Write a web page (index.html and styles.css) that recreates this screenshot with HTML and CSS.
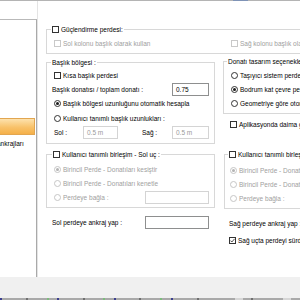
FILE: index.html
```html
<!DOCTYPE html>
<html lang="tr">
<head>
<meta charset="utf-8">
<title>Perde ayarları</title>
<link rel="stylesheet" href="styles.css">
</head>
<body>
<div class="topline"><span class="tl-mark"></span></div>
<div class="window">
  <aside class="sidebar">
    <div class="item selected"></div>
    <div class="item"><span class="clip">ankrajları</span></div>
  </aside>
  <main class="main">
    <div class="group g1">
      <div class="legend lg1"><span class="cb"></span><span>Güçlendirme perdesi:</span></div>
      <div class="g1-row">
        <div class="opt dis"><span class="cb dis"></span><span>Sol kolonu başlık olarak kullan</span></div>
        <div class="opt dis"><span class="cb dis"></span><span>Sağ kolonu başlık olarak kullan</span></div>
      </div>
    </div>
    <div class="cols">
      <div class="col left">
        <div class="group g2">
          <div class="legend lg2"><span>Başlık bölgesi :</span></div>
          <div class="row first pl7"><div class="opt"><span class="cb"></span><span>Kısa başlık perdesi</span></div></div>
          <div class="row split pl5"><span>Başlık donatısı / toplam donatı :</span><span class="field w37">0.75</span></div>
          <div class="row tall pl7"><div class="opt"><span class="rb on"></span><span>Başlık bölgesi uzunluğunu otomatik hesapla</span></div></div>
          <div class="row pl7"><div class="opt"><span class="rb"></span><span>Kullanıcı tanımlı başlık uzunlukları :</span></div></div>
          <div class="row tall pl7"><span class="lab1">Sol :</span><span class="field dis w35">0.5 m</span><span class="lab2">Sağ :</span><span class="field dis w37">0.5 m</span></div>
        </div>
        <div class="group g3">
          <div class="legend lg3"><span class="cb"></span><span>Kullanıcı tanımlı birleşim - Sol uç :</span></div>
          <div class="row first pl7"><div class="opt dis"><span class="rb dis on"></span><span>Birincil Perde - Donatıları kesiştir</span></div></div>
          <div class="row pl7"><div class="opt dis"><span class="rb dis"></span><span>Birincil Perde - Donatıları kenetle</span></div></div>
          <div class="row split pl7"><div class="opt dis"><span class="rb dis"></span><span>Perdeye bağla :</span></div><span class="field dis w64"></span></div>
        </div>
        <div class="row split anchor pl6"><span>Sol perdeye ankraj yap :</span><span class="field w64"></span></div>
      </div>
      <div class="col right">
        <div class="group g4">
          <div class="legend lg4"><span>Donatı tasarım seçenekleri</span></div>
          <div class="row first pl7"><div class="opt"><span class="rb"></span><span>Taşıyıcı sistem perdeleri</span></div></div>
          <div class="row pl7"><div class="opt"><span class="rb on"></span><span>Bodrum kat çevre perdeleri</span></div></div>
          <div class="row pl7"><div class="opt"><span class="rb"></span><span>Geometriye göre otomatik</span></div></div>
        </div>
        <div class="row apl pl7"><div class="opt"><span class="cb"></span><span>Aplikasyonda daima göster</span></div></div>
        <div class="group g5">
          <div class="legend lg5"><span class="cb"></span><span>Kullanıcı tanımlı birleşim - Sağ uç :</span></div>
          <div class="row first pl5"><div class="opt dis"><span class="rb dis on"></span><span>Birincil Perde - Donatıları kesiştir</span></div></div>
          <div class="row pl5"><div class="opt dis"><span class="rb dis"></span><span>Birincil Perde - Donatıları kenetle</span></div></div>
          <div class="row pl5"><div class="opt dis"><span class="rb dis"></span><span>Perdeye bağla :</span></div></div>
        </div>
        <div class="row anchor pl6"><span>Sağ perdeye ankraj yap :</span></div>
        <div class="row apl pl6"><div class="opt"><span class="cb on"><svg viewBox="0 0 7 7" width="5" height="5"><polyline points="0.6,3.6 2.6,5.6 6.4,1.2" fill="none" stroke="#222" stroke-width="1.1"/></svg></span><span>Sağ uçta perdeyi sürdür</span></div></div>
      </div>
    </div>
  </main>
</div>
<div class="footer"></div>
<div class="bottomline">
  <span class="bm navy"></span><span class="bm gray g24"></span><span class="bm gray g3"></span><span class="bm green g14"></span><span class="bm navy g8"></span><span class="bm gray g24"></span><span class="bm gray g2"></span><span class="bm green g14"></span><span class="bm navy g9"></span><span class="bm gray g23"></span><span class="bm gray g3"></span><span class="bm green g14"></span><span class="bm navy g9"></span><span class="bm gray g24"></span><span class="bm gray g4"></span><span class="bm light g30"></span><span class="bm gray g8"></span><span class="bm light g30"></span>
</div>
</body>
</html>
```
FILE: styles.css
```css
* { box-sizing: border-box; }
html, body { margin: 0; padding: 0; }
body {
  width: 300px;
  height: 300px;
  overflow: hidden;
  background: #fff;
  font-family: "Liberation Sans", Arial, sans-serif;
  font-size: 6.5px;
  color: #000;
}
.topline {
  height: 1px;
  background: #b4b4b4;
  display: flex;
}
.tl-mark {
  width: 15px;
  height: 1px;
  margin-left: 233px;
  background: #7f93b6;
}
.window {
  height: 276px;
  display: flex;
}
.sidebar {
  width: 37px;
  height: 258px;
  margin-top: 18px;
  border-top: 1px solid #b9b9b9;
  border-right: 1px solid #a9a9a9;
  background: #fff;
  overflow: hidden;
  padding-top: 98px;
  flex: none;
}
.item {
  width: 35px;
  height: 17px;
  display: flex;
  align-items: center;
  white-space: nowrap;
  overflow: hidden;
}
.item.selected {
  background: linear-gradient(#fde2ad, #f8c26a 55%, #f5b049);
  border: 1px solid #e2a650;
  border-left: none;
}
.clip { margin-left: -3px; }
.main {
  flex: 1;
  min-width: 0;
  border-left: 1px solid #e4e4e4;
  padding-left: 8px;
  margin-left: 0;
}
.group {
  border: 1px solid #d8d8d8;
}
.legend {
  display: flex;
  align-items: center;
  gap: 2px;
  height: 9px;
  margin-top: -5px;
  width: max-content;
  padding: 0 1px;
  background: #fff;
  white-space: nowrap;
}
.g1 {
  margin-top: 28px;
  border-right: none;
  padding-bottom: 5px;
}
.lg1 { margin-left: 4px; }
.g1-row {
  display: grid;
  grid-template-columns: 177px 1fr;
  height: 10px;
  margin-top: 4px;
  padding-left: 7px;
  align-items: center;
  white-space: nowrap;
}
.cols {
  display: grid;
  grid-template-columns: 169px 1fr;
  column-gap: 8px;
}
.col { min-width: 0; white-space: nowrap; }
.row {
  display: flex;
  align-items: center;
  height: 14px;
  white-space: nowrap;
}
.row.tall { height: 15px; }
.row.split { justify-content: space-between; }
.pl5 { padding-left: 5px; }
.pl6 { padding-left: 6px; }
.pl7 { padding-left: 7px; }
.opt {
  display: flex;
  align-items: center;
  gap: 2px;
}
.dis { color: #a0a0a0; }
.cb {
  width: 7px;
  height: 7px;
  border: 1px solid #333;
  background: #fff;
  flex: none;
  display: flex;
  align-items: center;
  justify-content: center;
}
.cb.dis { border-color: #c9c9c9; }
.rb {
  width: 7px;
  height: 7px;
  border: 1px solid #333;
  border-radius: 50%;
  background: #fff;
  flex: none;
  display: flex;
  align-items: center;
  justify-content: center;
}
.rb.on::after {
  content: "";
  width: 3px;
  height: 3px;
  border-radius: 50%;
  background: #1a1a1a;
}
.rb.dis { border-color: #c6c6c6; }
.rb.dis.on::after { background: #b3b3b3; }
.field {
  height: 13px;
  border: 1px solid #8e8f8f;
  background: #fff;
  padding-left: 3px;
  display: flex;
  align-items: center;
  color: #000;
  flex: none;
}
.field.dis { border-color: #d4d4d4; color: #9a9a9a; }
.w35 { width: 35px; }
.w37 { width: 37px; }
.w64 { width: 64px; }
.lab1 { width: 29px; }
.lab2 { width: 30px; margin-left: 24px; }

/* left column */
.g2 { margin-top: 8px; padding-bottom: 3px; }
.lg2 { margin-left: 4px; }
.g2 .row.split { padding-right: 5px; }
.row.first { margin-top: 1px; }
.g3 { margin-top: 10px; padding-bottom: 3px; }
.lg3 { margin-left: 5px; }
.g3 .row.first { margin-top: 3px; }
.g3 .row.split { padding-right: 5px; }
.anchor { margin-top: 7px; }
.left .anchor { padding-right: 6px; }

/* right column */
.g4 {
  margin-top: 7px;
  border-right: none;
  padding-bottom: 3px;
}
.lg4 { margin-left: 3px; }
.g4 .row.first { margin-top: 2px; }
.apl { margin-top: 3px; }
.g5 {
  margin-top: 23px;
  margin-left: 1px;
  border-right: none;
  padding-bottom: 3px;
}
.lg5 { margin-left: 3px; }
.g5 .row.first { margin-top: 4px; }

.footer {
  height: 21px;
  background: #f0f0f0;
}
.bottomline {
  height: 2px;
  background: #a9a9a9;
  display: flex;
}
.bm { width: 2px; height: 2px; flex: none; }
.navy { background: #3b3f8f; }
.gray { background: #6f6f6f; }
.green { background: #7dbb7d; }
.light { background: #d6d6d6; width: 8px; }
.bm.g2 { margin-left: 2px; }
.bm.g3 { margin-left: 3px; }
.bm.g4 { margin-left: 4px; }
.bm.g8 { margin-left: 8px; }
.bm.g9 { margin-left: 9px; }
.bm.g14 { margin-left: 14px; }
.bm.g23 { margin-left: 23px; }
.bm.g24 { margin-left: 24px; }
.bm.g30 { margin-left: 30px; }
```
